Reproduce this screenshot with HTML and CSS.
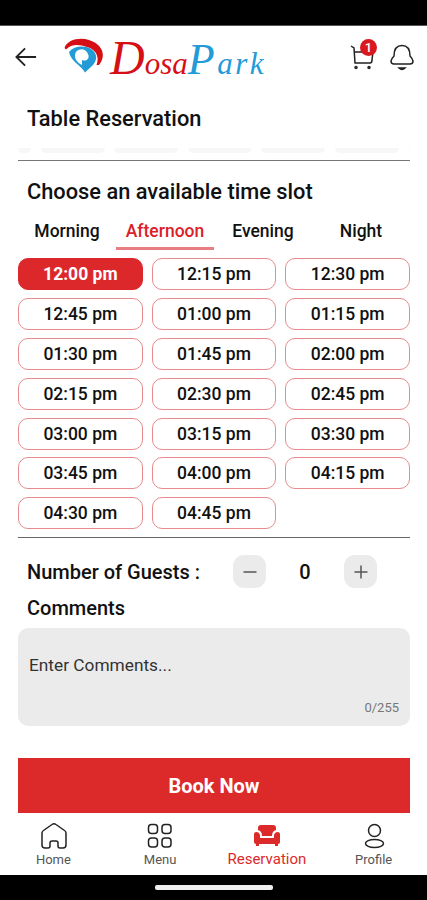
FILE: index.html
```html
<!DOCTYPE html>
<html lang="en">
<head>
    <meta charset="UTF-8">
    <meta name="viewport" content="width=device-width, initial-scale=1.0">
    <title>Table Reservation</title>
    <link rel="stylesheet" href="styles.css">
</head>
<body>
    <div class="status-bar"></div>
    <header class="header">
        <svg class="back" viewBox="0 0 24 22"><path d="M23 11H2M11 1.500L1.500 11L11 20.500"/></svg>
        <svg class="logo-mark" viewBox="0 0 40 36">
            <path class="logo-red" d="M.5 10C3 2 15-1 25 2C38 6 43 17 35 27L32.500 27C36 18 31 11 23 9C15 6 7 6 2 11.500Z"/>
            <path class="logo-blue" fill-rule="evenodd" d="M5 14C10 8 20 7 27 11C33 15 34 21 29 27L21 34.500C18 28 7 24 5 14ZM12 14C9 19 13 25 18 27L18 22C23 24 26 20 24 16C22 10 15 10 12 14Z"/>
        </svg>
        <div class="brand"><span class="brand-red"><span class="cap-d">D</span>osa</span><span class="brand-blue"><span class="cap-p">P</span>ark</span></div>
        <div class="cart">
            <svg class="cart-icon" viewBox="0 0 26 28"><path d="M1 2L4 4L5 19H20Q22 19 22 16L23 8H5"/><circle cx="6" cy="23.500" r="1"/><circle cx="19" cy="23.500" r="1"/></svg>
            <span class="badge">1</span>
        </div>
        <svg class="bell" viewBox="0 0 24 28"><path d="M4 20Q1 20 1 17Q2 14 4 12C4 5 7 1.500 12 1.500S20 5 20 12Q22 14 23 17Q23 20 20 20Z"/><path d="M9 24Q12 27 15 24Z"/></svg>
    </header>

    <main class="content">
        <h1>Table Reservation</h1>
        <div class="dates">
            <span></span><span></span><span></span><span></span><span></span><span></span><span></span>
        </div>
        <section class="slots">
            <h2>Choose an available time slot</h2>
            <div class="tabs">
                <button>Morning</button>
                <button class="active">Afternoon</button>
                <button>Evening</button>
                <button>Night</button>
            </div>
            <div class="slot-grid">
                <button class="slot selected">12:00 pm</button>
                <button class="slot">12:15 pm</button>
                <button class="slot">12:30 pm</button>
                <button class="slot">12:45 pm</button>
                <button class="slot">01:00 pm</button>
                <button class="slot">01:15 pm</button>
                <button class="slot">01:30 pm</button>
                <button class="slot">01:45 pm</button>
                <button class="slot">02:00 pm</button>
                <button class="slot">02:15 pm</button>
                <button class="slot">02:30 pm</button>
                <button class="slot">02:45 pm</button>
                <button class="slot">03:00 pm</button>
                <button class="slot">03:15 pm</button>
                <button class="slot">03:30 pm</button>
                <button class="slot">03:45 pm</button>
                <button class="slot">04:00 pm</button>
                <button class="slot">04:15 pm</button>
                <button class="slot">04:30 pm</button>
                <button class="slot">04:45 pm</button>
            </div>
        </section>
        <div class="guests">
            <span class="guests-label">Number of Guests :</span>
            <button class="step"><svg viewBox="0 0 14 14"><path d="M.5 7H13.500"/></svg></button>
            <span class="count">0</span>
            <button class="step"><svg viewBox="0 0 14 14"><path d="M.5 7H13.500M7 .5V13.500"/></svg></button>
        </div>
        <h3>Comments</h3>
        <div class="comments">
            <span class="placeholder">Enter Comments...</span>
            <span class="counter">0/255</span>
        </div>
        <button class="book">Book Now</button>
    </main>

    <nav class="nav">
        <a class="nav-item">
            <svg viewBox="0 0 28 28"><path d="M3 11Q3 9.500 4.500 8.500L13 2.500Q15 1 17 2.500L25.500 8.500Q27 9.500 27 11V23Q27 26 24 26H21Q19 26 19 24V21Q19 19 17 19H13Q11 19 11 21V24Q11 26 9 26H6Q3 26 3 23Z"/></svg>
            <span>Home</span>
        </a>
        <a class="nav-item">
            <svg viewBox="0 0 28 28"><rect x="2.500" y="2.500" width="9" height="9" rx="3"/><rect x="16" y="2.500" width="9" height="9" rx="3"/><rect x="2.500" y="16" width="9" height="9" rx="3"/><rect x="16" y="16" width="9" height="9" rx="3"/></svg>
            <span>Menu</span>
        </a>
        <a class="nav-item current">
            <svg viewBox="0 0 28 28"><path d="M5 8V6Q5 3 8 3H20Q23 3 23 6V8Q19 9 19 14H9Q9 9 5 8ZM1 12Q1 10 3.500 10T7 13V16H21V13Q22 10 24.500 10T27 12V20Q27 22 25 22V24H22V22H6V24H3V22Q1 22 1 20Z"/></svg>
            <span>Reservation</span>
        </a>
        <a class="nav-item">
            <svg viewBox="0 0 28 28"><circle cx="14.500" cy="8.500" r="6"/><ellipse cx="14.500" cy="21.500" rx="9" ry="4"/></svg>
            <span>Profile</span>
        </a>
    </nav>
    <div class="home-bar"><span></span></div>
</body>
</html>
```
FILE: styles.css
```css
* {
    box-sizing: border-box;
}
body {
    margin: 0;
    width: 427px;
    height: 900px;
    display: flex;
    flex-direction: column;
    overflow: hidden;
    background: #fff;
    color: #111;
    font-family: Roboto, sans-serif;
}
button {
    border: none;
    background: none;
    padding: 0;
    font-family: inherit;
    color: inherit;
}
svg {
    display: block;
    fill: none;
    stroke: #222;
    stroke-width: 1.5;
    flex-shrink: 0;
}
h1, h2, h3 {
    margin: 0;
    font-weight: 500;
}
.status-bar {
    height: 26px;
    background: #000;
    border-bottom: 1px solid #555;
}
.header {
    height: 64px;
    display: flex;
    align-items: center;
    padding: 0 13px 0 15px;
}
.back {
    width: 22px;
    height: 22px;
    margin-top: -2px;
    stroke-width: 2;
}
.logo-mark {
    width: 40px;
    height: 36px;
    margin-left: 27px;
    margin-top: -4px;
    stroke: none;
}
.logo-red {
    fill: #d50f15;
}
.logo-blue {
    fill: #229bd7;
}
.brand {
    width: 165px;
    margin-left: 6px;
    padding-top: 6px;
    font-family: "Liberation Serif", serif;
    font-style: italic;
    font-size: 31px;
    line-height: 50px;
    white-space: nowrap;
}
.brand-red {
    color: #d50f15;
}
.brand-blue {
    color: #229bd7;
    letter-spacing: 2.5px;
}
.cap-d {
    font-size: 48px;
}
.cap-p {
    font-size: 44px;
}
.cart {
    position: relative;
    margin-left: auto;
}
.cart-icon {
    width: 26px;
    height: 28px;
}
.badge {
    position: absolute;
    top: -5px;
    right: -1px;
    width: 17px;
    height: 17px;
    border-radius: 50%;
    background: #d9191f;
    color: #fff;
    font-size: 13px;
    font-weight: 500;
    line-height: 17px;
    text-align: center;
}
.bell {
    width: 24px;
    height: 28px;
    margin-left: 14px;
}
.content {
    padding: 0 17px 0 18px;
}
h1 {
    padding: 15px 9px 0;
    font-size: 21.8px;
    line-height: 27px;
}
.dates {
    display: flex;
    gap: 9.600px;
    height: 29px;
    padding-top: 16px;
    border-bottom: 1px solid #777;
    overflow: hidden;
}
.dates span {
    flex: 0 0 64px;
    height: 5px;
    background: #f7f7f7;
    border-radius: 0 0 12px 12px;
}
.dates span:first-child {
    flex-basis: 13px;
}
h2 {
    padding: 17px 9px 0;
    font-size: 21.8px;
    line-height: 28px;
}
.tabs {
    display: grid;
    grid-template-columns: repeat(4, 98px);
    height: 44px;
}
.tabs button {
    height: 44px;
    padding-top: 9px;
    border-bottom: 3px solid transparent;
    font-size: 17.5px;
    font-weight: 500;
}
.tabs .active {
    color: #dc2027;
    border-bottom-color: #e87d82;
}
.slot-grid {
    display: grid;
    grid-template-columns: repeat(3, 1fr);
    gap: 7.900px 9px;
    padding: 8px 0;
    border-bottom: 1px solid #666;
}
.slot {
    height: 32px;
    border: 1px solid #e78b8d;
    border-radius: 10px;
    font-size: 17.5px;
    font-weight: 500;
}
.selected {
    background: #dc282a;
    border-color: #dc282a;
    color: #fff;
    font-weight: 700;
}
.guests {
    display: flex;
    align-items: center;
    height: 67px;
    padding-left: 9px;
}
.guests-label {
    width: 206px;
    font-size: 20px;
    font-weight: 500;
}
.step {
    width: 33px;
    height: 33px;
    display: grid;
    place-items: center;
    border-radius: 11px;
    background: #ebebeb;
}
.step svg {
    width: 14px;
    height: 14px;
    stroke: #555;
}
.count {
    width: 78px;
    font-size: 20px;
    font-weight: 500;
    text-align: center;
}
h3 {
    padding: 0 9px;
    font-size: 20px;
    line-height: 24px;
    margin-top: -9px;
}
.comments {
    display: flex;
    flex-direction: column;
    justify-content: space-between;
    height: 98px;
    margin-top: 8px;
    padding: 26px 11px 10px;
    border-radius: 10px;
    background: #ebebeb;
}
.placeholder {
    font-size: 17.300px;
    line-height: 22px;
    color: #333;
}
.counter {
    align-self: flex-end;
    font-size: 13px;
    line-height: 16px;
    color: #777;
}
.book {
    display: block;
    width: 100%;
    height: 55px;
    margin-top: 32px;
    background: #dc2a2b;
    color: #fff;
    font-size: 20px;
    font-weight: 700;
}
.nav {
    flex: 1;
    display: grid;
    grid-template-columns: repeat(4, 1fr);
    padding-top: 9px;
}
.nav-item {
    display: flex;
    flex-direction: column;
    align-items: center;
    font-size: 13px;
    line-height: 19px;
    color: #555;
}
.nav-item svg {
    width: 28px;
    height: 28px;
}
.current {
    color: #dc2a2b;
    font-size: 15px;
    line-height: 18px;
}
.current svg {
    fill: #dc2a2b;
    stroke: none;
}
.home-bar {
    height: 25px;
    display: flex;
    justify-content: center;
    padding-top: 10px;
    background: #000;
}
.home-bar span {
    width: 118px;
    height: 5px;
    border-radius: 2px;
    background: #eee;
}
```
